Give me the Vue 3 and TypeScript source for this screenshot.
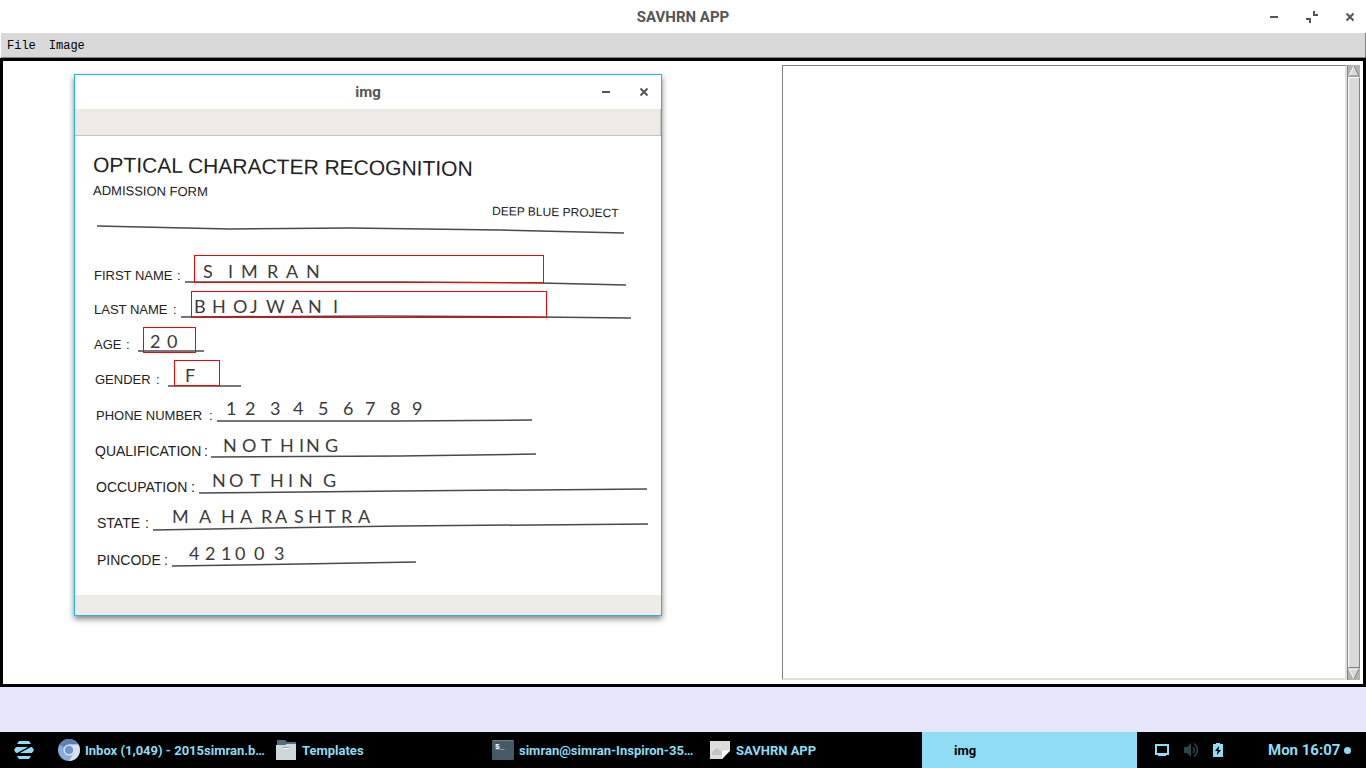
<script setup lang="ts">
import { ref } from 'vue'

interface Label { text: string; x: number; y: number; colon: number; large?: boolean }
interface Writing { text: string; y: number; xs: number[] }

const notes = ref('')

const labels: Label[] = [
  { text: 'FIRST NAME', x: 94, y: 280, colon: 177 },
  { text: 'LAST NAME', x: 94, y: 314, colon: 173 },
  { text: 'AGE', x: 94, y: 349, colon: 126 },
  { text: 'GENDER', x: 95, y: 384, colon: 156 },
  { text: 'PHONE NUMBER', x: 96, y: 420, colon: 209 },
  { text: 'QUALIFICATION', x: 95, y: 456, colon: 204, large: true },
  { text: 'OCCUPATION', x: 96, y: 492, colon: 191, large: true },
  { text: 'STATE', x: 97, y: 528, colon: 145, large: true },
  { text: 'PINCODE', x: 97, y: 565, colon: 164, large: true }
]

const writings: Writing[] = [
  { text: 'SIMRAN', y: 278, xs: [203, 228, 241, 267, 286, 306] },
  { text: 'BHOJWANI', y: 313, xs: [194, 212, 233, 250, 266, 291, 308, 333] },
  { text: '20', y: 348, xs: [150, 167] },
  { text: 'F', y: 382, xs: [185] },
  { text: '123456789', y: 415, xs: [226, 245, 270, 293, 318, 343, 365, 390, 412] },
  { text: 'NOTHING', y: 452, xs: [223, 242, 261, 280, 299, 306, 325] },
  { text: 'NOTHING', y: 487, xs: [212, 229, 250, 270, 288, 299, 323] },
  { text: 'MAHARASHTRA', y: 523, xs: [172, 199, 221, 240, 261, 275, 294, 308, 325, 341, 358] },
  { text: '421003', y: 560, xs: [189, 205, 221, 235, 254, 274] }
]

const rules = [
  'M97 226 L230 229 L350 228 L500 230 L624 233',
  'M185 282 L400 282 L540 283 L626 285',
  'M181 317 L380 316 L540 317 L631 318',
  'M138 351 L204 351',
  'M168 386 L241 386',
  'M217 421 L400 421 L532 420',
  'M211 457 L400 456 L536 454',
  'M199 493 L400 491 L647 489',
  'M153 530 L400 526 L648 524',
  'M172 566 L300 564 L416 562'
]

const boxes = [
  { x: 194, y: 255, w: 350, h: 28 },
  { x: 191, y: 291, w: 356, h: 27 },
  { x: 143, y: 327, w: 53, h: 26 },
  { x: 174, y: 360, w: 46, h: 26 }
]
</script>

<template>
  <div class="screen">
    <header class="titlebar main-title">
      <span class="title">SAVHRN APP</span>
      <div class="controls">
        <button aria-label="Minimize"><svg width="14" height="14" viewBox="0 0 14 14"><path d="M3 6h8v2H3z" /></svg></button>
        <button aria-label="Restore"><svg width="14" height="14" viewBox="0 0 14 14"><path d="M8 1h2v3h3v2H8zM1 8h5v5H4v-3H1z" /></svg></button>
        <button aria-label="Close"><svg width="14" height="14" viewBox="0 0 14 14"><path class="cross" d="M3.500 3.500l7 7M10.500 3.500l-7 7" /></svg></button>
      </div>
    </header>

    <nav class="menubar">
      <button>File</button>
      <button>Image</button>
    </nav>

    <main class="workspace">
      <section class="output">
        <textarea v-model="notes" aria-label="Recognized text"></textarea>
        <div class="scrollbar">
          <svg class="arrow" width="12" height="12" viewBox="0 0 12 12">
            <rect width="12" height="12" fill="#b3b3b3" />
            <path d="M6 1L1 11H11z" fill="#d9d9d9" />
            <path d="M6 1L1 11" stroke="#fff" fill="none" />
            <path d="M6 1l5 10H1" stroke="#828282" fill="none" />
          </svg>
          <div class="thumb"></div>
          <svg class="arrow" width="12" height="12" viewBox="0 0 12 12">
            <rect width="12" height="12" fill="#b3b3b3" />
            <path d="M1 1H11L6 11z" fill="#d9d9d9" />
            <path d="M11 1H1l5 10" stroke="#fff" fill="none" />
            <path d="M11 1L6 11" stroke="#828282" fill="none" />
          </svg>
        </div>
      </section>

      <section class="window" aria-label="img">
        <header class="titlebar">
          <span class="title">img</span>
          <div class="controls">
            <button aria-label="Minimize image"><svg width="14" height="14" viewBox="0 0 14 14"><path d="M3 6h8v2H3z" /></svg></button>
            <button aria-label="Close image"><svg width="14" height="14" viewBox="0 0 14 14"><path class="cross" d="M3.500 3.500l7 7M10.500 3.500l-7 7" /></svg></button>
          </div>
        </header>
        <div class="toolbar"></div>
        <svg class="scan" viewBox="75 136 586 459">
          <text class="heading" x="93" y="172" transform="rotate(0.6 93 172)">OPTICAL CHARACTER RECOGNITION</text>
          <text class="label" x="93" y="195" transform="rotate(0.6 93 195)">ADMISSION FORM</text>
          <text class="label small" x="492" y="215" transform="rotate(1 492 215)">DEEP BLUE PROJECT</text>
          <path v-for="r in rules" :key="r" class="rule" :d="r" />
          <text v-for="l in labels" :key="l.text" class="label" :class="{ large: l.large }" :x="l.x" :y="l.y">{{ l.text }} <tspan :x="l.colon">:</tspan></text>
          <text v-for="(w, i) in writings" :key="i" class="hand" :x="w.xs.join(' ')" :y="w.y">{{ w.text }}</text>
          <rect v-for="b in boxes" :key="b.y" class="box" :x="b.x" :y="b.y" :width="b.w - 1" :height="b.h - 1" />
        </svg>
        <div class="statusbar"></div>
      </section>
    </main>

    <div class="footer-strip"></div>

    <footer class="taskbar">
      <button class="start" aria-label="Menu">
        <svg width="20" height="20" viewBox="0 0 20 20" fill="#8fdcf4">
          <path d="M5 1h10l2 3H3zM2 7h12L3 13H2L0 10zM18 13H6L17 7h1l2 3zM3 16h14l-2 3H5z" />
        </svg>
      </button>
      <div class="tasks">
        <button class="task">
          <svg width="22" height="22" viewBox="0 0 22 22">
            <circle cx="11" cy="11" r="11" fill="#86acd7" />
            <path d="M11 11L1.500 5.500A11 11 0 0 1 20.500 5.500H11z" fill="#5c82b5" />
            <path d="M11 5.500h9.500A11 11 0 0 1 11 22l5-8.500z" fill="#d3e1f2" />
            <circle cx="11" cy="11" r="5.500" fill="#e4edf8" />
            <circle cx="11" cy="11" r="4.300" fill="#6b96d1" />
          </svg>
          <span>Inbox (1,049) - 2015simran.b…</span>
        </button>
        <button class="task">
          <svg width="22" height="22" viewBox="0 0 22 22">
            <path d="M2 1h8l2 2h9v7H2z" fill="#546e7a" />
            <path d="M1 6h9l2-1h9v16H1z" fill="#cfd8dc" />
            <path d="M8 9.500h6" stroke="#fff" />
            <path d="M8 8.500h6" stroke="#9ba5a9" />
          </svg>
          <span>Templates</span>
        </button>
        <button class="task">
          <svg width="22" height="22" viewBox="0 0 22 22">
            <rect y="1" width="22" height="20" rx="1" fill="#465a65" />
            <path d="M1 1.500h20" stroke="#707f88" />
            <text x="3" y="10" class="prompt">$_</text>
          </svg>
          <span>simran@simran-Inspiron-35…</span>
        </button>
        <button class="task">
          <svg width="22" height="22" viewBox="0 0 22 22">
            <path d="M1 2h20v10l-8 8H1z" fill="#dcdcdc" />
            <path d="M21 11l-8 9v-8z" fill="#f8f8f8" />
            <path d="M3 16v-3l5-4 5 4v3z" fill="#c4c4c4" />
          </svg>
          <span>SAVHRN APP</span>
        </button>
        <button class="task active"><span>img</span></button>
      </div>
      <div class="tray">
        <svg width="14" height="14" viewBox="0 0 14 14"><path d="M1 2h12v9H1z" fill="none" stroke="#8fdcf4" stroke-width="2" /><path d="M3 11h8v2H3z" fill="#8fdcf4" /></svg>
        <svg width="16" height="16" viewBox="0 0 16 16"><path d="M1 5h3l4-4v14l-4-4H1z" fill="#2d454d" /><path d="M10 5q3 3 0 6M11 1.500q7 6 0 13" fill="none" stroke="#2d454d" stroke-width="1.500" /></svg>
        <svg width="10" height="14" viewBox="0 0 10 14"><path d="M0 1h3V0h4v1h3v13H0z" fill="#8fdcf4" /><path d="M6 3L2 8h2.500L4 12l4-5H5.500z" fill="#000" /></svg>
        <time>Mon 16:07</time>
        <i class="dot"></i>
      </div>
    </footer>
  </div>
</template>

<style>
body { margin: 0; }
</style>

<style scoped>
* { box-sizing: border-box; }
button {
  margin: 0;
  padding: 0;
  border: 0;
  background: none;
  color: inherit;
  font: inherit;
}
svg { display: block; flex: none; }
.screen {
  display: flex;
  flex-direction: column;
  height: 100vh;
  background: #fff;
  font-family: Roboto, "Liberation Sans", sans-serif;
}
.titlebar {
  display: grid;
  grid-template-columns: 1fr auto 1fr;
  align-items: center;
  height: 34px;
  flex: none;
  background: #fff;
  color: #555;
  font-size: 15px;
  font-weight: 700;
}
.main-title { height: 33px; }
.title { grid-column: 2; }
.controls {
  display: flex;
  justify-content: flex-end;
  gap: 24px;
  padding-right: 10px;
  fill: #555;
}
.main-title .controls { padding-right: 9px; }
.cross { fill: none; stroke: #555; stroke-width: 2; }
.menubar {
  display: flex;
  align-items: center;
  gap: 13px;
  flex: none;
  height: 25px;
  margin-left: 1px;
  padding: 2px 0 0 6px;
  border-right: 1px solid #828282;
  border-bottom: 1px solid #828282;
  background: #d9d9d9;
  color: #000;
  font: 12px "Liberation Mono", monospace;
}
.workspace {
  position: relative;
  display: flex;
  justify-content: flex-end;
  flex: 1;
  min-height: 0;
  padding: 4px 3px;
  border: 3px solid #000;
}
.output { display: flex; width: 578px; }
textarea {
  flex: 1;
  min-width: 0;
  margin: 0;
  padding: 4px;
  border: solid;
  border-width: 1px 2px 2px 1px;
  border-color: #828282 #e0e0e0 #e0e0e0 #828282;
  border-radius: 0;
  outline: 0;
  resize: none;
  background: #fff;
  font: 12px "Liberation Mono", monospace;
}
.scrollbar {
  display: flex;
  flex-direction: column;
  width: 13px;
  border-left: 1px solid #828282;
  background: #b3b3b3;
}
.thumb {
  flex: 1;
  border: 1px solid;
  border-color: #fff #828282 #828282 #fff;
  background: #d9d9d9;
}
.window {
  position: absolute;
  left: 71px;
  top: 13px;
  width: 588px;
  border: 1px solid #1fb9e4;
  background: #fff;
  box-shadow: 0 3px 6px rgba(0, 0, 0, 0.5);
}
.toolbar {
  height: 27px;
  border-right: 1px solid #c6c2bd;
  border-bottom: 1px solid #c6c2bd;
  background: #eeebe7;
}
.statusbar { height: 20px; background: #eeebe7; }
.scan { width: 100%; height: auto; }
.heading, .label { font-family: "Liberation Sans", Arial, sans-serif; fill: #222; }
.heading { font-size: 21px; }
.label { font-size: 13px; }
.label.small { font-size: 12px; }
.label.large { font-size: 14px; }
.hand { font: 400 18px Lato, sans-serif; fill: #3a3a3a; }
.rule { fill: none; stroke: #4a4a4a; stroke-width: 1.5; }
.box { fill: none; stroke: #f00; stroke-width: 1; shape-rendering: crispEdges; }
.footer-strip { flex: none; height: 45px; background: #e6e6fa; }
.taskbar {
  display: flex;
  flex: none;
  height: 36px;
  background: #000;
  color: #8fdcf4;
  font-size: 13px;
  font-weight: 700;
}
.start { display: flex; align-items: center; width: 54px; padding-left: 14px; }
.tasks {
  display: grid;
  grid-template-columns: repeat(4, minmax(0, 217px)) minmax(0, 1fr);
  flex: 1;
  min-width: 0;
}
.task {
  display: flex;
  align-items: center;
  gap: 5px;
  min-width: 0;
  padding-left: 4px;
  white-space: nowrap;
}
.task.active { padding-left: 32px; background: #8fdcf4; color: #000; }
.prompt { fill: #fff; font: 700 8px "Liberation Mono", monospace; }
.tray {
  display: flex;
  align-items: center;
  gap: 14px;
  width: 229px;
  padding-left: 18px;
  font-size: 15px;
}
.tray time { margin-left: 31px; white-space: nowrap; }
.dot { width: 7px; height: 7px; margin-left: -10px; border-radius: 50%; background: #8fdcf4; }
</style>
